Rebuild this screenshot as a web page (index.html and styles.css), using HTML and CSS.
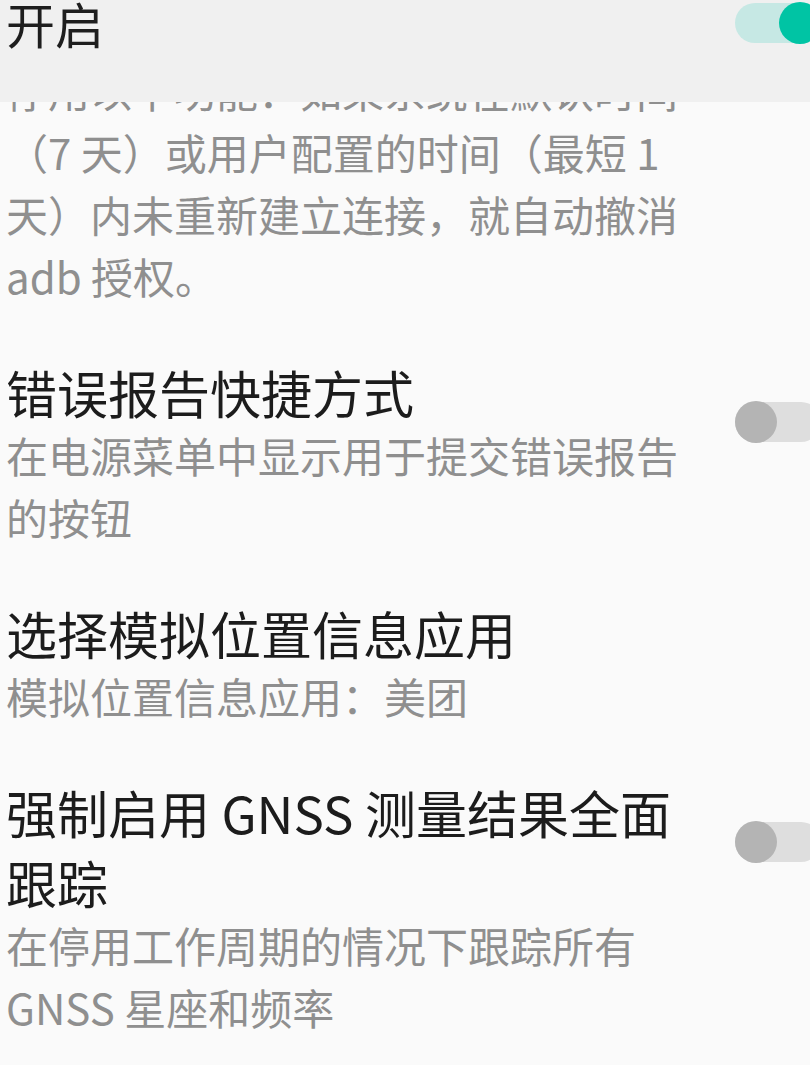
FILE: index.html
```html
<!DOCTYPE html>
<html lang="zh-CN">
<head>
<meta charset="utf-8">
<title>开发者选项</title>
<link rel="stylesheet" href="styles.css">
</head>
<body>
<header class="master-bar">
  <span class="master-label">开启</span>
  <span class="switch switch-on"><span class="thumb"></span></span>
</header>
<main class="list">
  <section class="item item-first">
    <div class="texts">
      <p class="summary">停用以下功能：如果系统在默认时间（7 天）或用户配置的时间（最短 1 天）内未重新建立连接，就自动撤消 adb 授权。</p>
    </div>
  </section>
  <section class="item">
    <div class="texts">
      <h2 class="title">错误报告快捷方式</h2>
      <p class="summary">在电源菜单中显示用于提交错误报告的按钮</p>
    </div>
    <span class="switch switch-off"><span class="thumb"></span></span>
  </section>
  <section class="item">
    <div class="texts">
      <h2 class="title">选择模拟位置信息应用</h2>
      <p class="summary">模拟位置信息应用：美团</p>
    </div>
  </section>
  <section class="item">
    <div class="texts">
      <h2 class="title">强制启用 GNSS 测量结果全面跟踪</h2>
      <p class="summary">在停用工作周期的情况下跟踪所有 GNSS 星座和频率</p>
    </div>
    <span class="switch switch-off"><span class="thumb"></span></span>
  </section>
</main>
</body>
</html>
```
FILE: styles.css
```css
html, body {
  margin: 0;
  padding: 0;
}
body {
  background: #fafafa;
  font-family: "Noto Sans CJK SC", "Noto Sans", sans-serif;
  overflow: hidden;
  width: 810px;
  height: 1065px;
}
.master-bar {
  position: fixed;
  top: 0;
  left: 0;
  right: 0;
  height: 102px;
  background: #f0f0f0;
  display: flex;
  align-items: flex-start;
  padding-left: 6px;
  z-index: 2;
}
.master-label {
  font-size: 49px;
  line-height: 46px;
  color: #1e1e1e;
}
.switch {
  position: relative;
  display: block;
  flex: none;
  width: 86px;
  height: 40px;
  border-radius: 20px;
  margin-left: auto;
  margin-right: -11px;
}
.switch .thumb {
  position: absolute;
  top: -1px;
  width: 42px;
  height: 42px;
  border-radius: 50%;
}
.switch-on {
  background: #c6e8e4;
  margin-top: 3px;
}
.switch-on .thumb {
  right: 0;
  background: #00c4a4;
}
.switch-off {
  background: #dedede;
  margin-top: 45px;
}
.switch-off .thumb {
  left: 0;
  background: #b4b4b4;
}
.list {
  padding-top: 59px;
  display: flex;
  flex-direction: column;
  gap: 50px;
}
.item {
  display: flex;
  align-items: flex-start;
  padding-left: 6px;
}
.texts {
  width: 686px;
  flex: none;
}
.title {
  margin: 0;
  font-size: 51px;
  line-height: 70px;
  font-weight: 400;
  color: #1c1c1c;
}
.summary {
  margin: -3px 0 0;
  font-size: 42px;
  line-height: 62px;
  color: #8f8f8f;
}
.item-first .summary {
  margin-top: 0;
}
```
